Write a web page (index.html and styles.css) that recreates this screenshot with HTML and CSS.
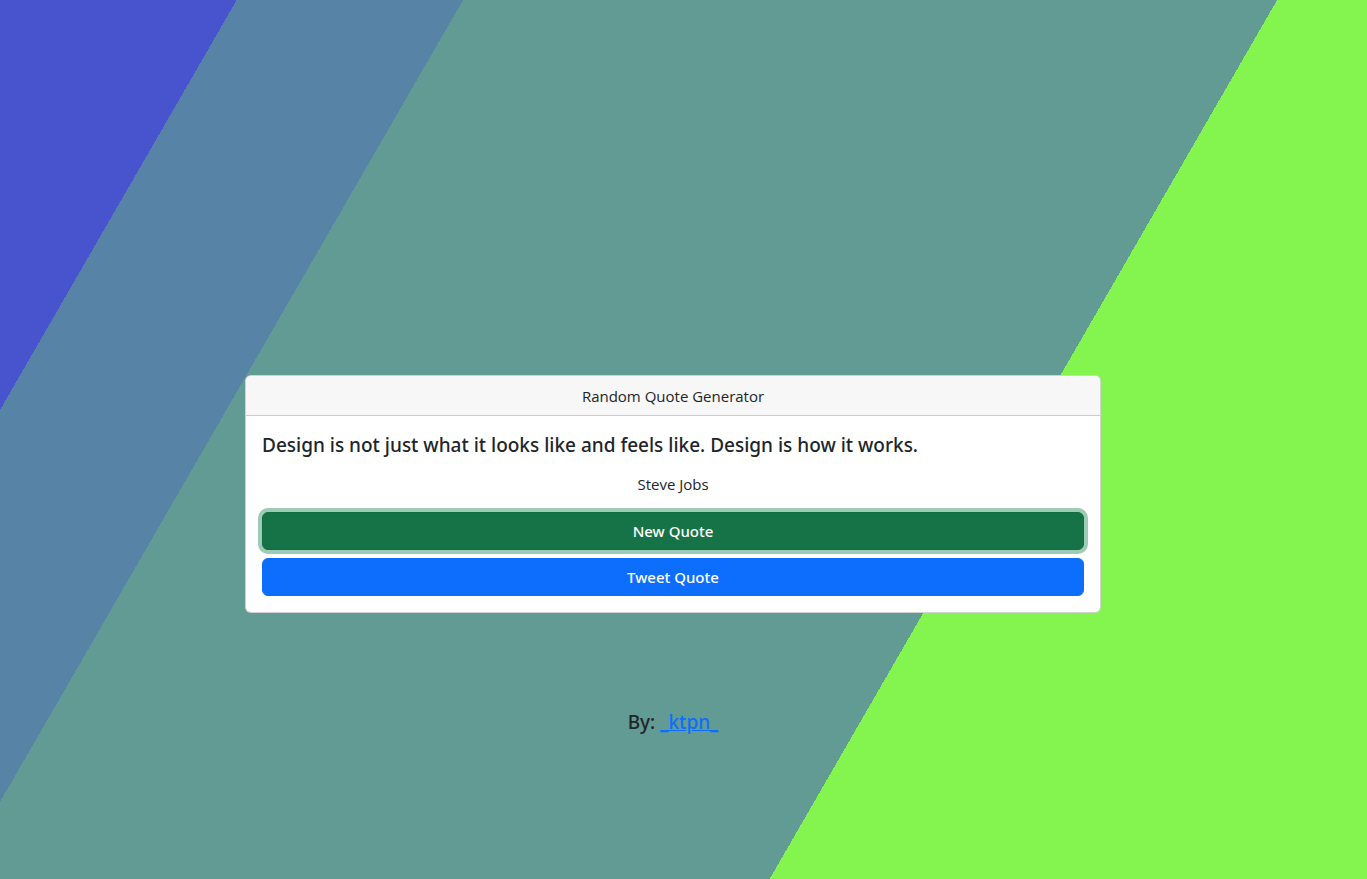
FILE: index.html
```html
<!DOCTYPE html>
<html lang="en">
<head>
<meta charset="utf-8">
<title>Random Quote Generator</title>
<link rel="stylesheet" href="styles.css">
</head>
<body>
<div class="page">
  <div class="card">
    <div class="card-header">Random Quote Generator</div>
    <div class="card-body">
      <h5 class="quote">Design is not just what it looks like and feels like. Design is how it works.</h5>
      <p class="author">Steve Jobs</p>
      <div class="actions">
        <button class="btn btn-new" type="button">New Quote</button>
        <button class="btn btn-tweet" type="button">Tweet Quote</button>
      </div>
    </div>
  </div>
  <h5 class="credit">By: <a href="#" class="credit-link">_ktpn_</a></h5>
</div>
</body>
</html>
```

FILE: styles.css
```css
html, body {
  margin: 0;
  padding: 0;
}

body {
  min-height: 879px;
  font-family: "Open Sans", "Noto Sans", sans-serif;
  color: #212529;
  background: linear-gradient(120deg,
    #4854ce 205px, #5783a6 205px,
    #5783a6 401px, #619b94 401px,
    #619b94 1106px, #84f54f 1106px);
  background-repeat: no-repeat;
}

.page {
  display: flex;
  flex-direction: column;
  align-items: center;
  padding: 375px 21px 0 0;
}

.card {
  width: 856px;
  box-sizing: border-box;
  background: #fff;
  border: 1px solid rgba(0, 0, 0, 0.175);
  border-radius: 6px;
  overflow: hidden;
}

.card-header {
  padding: 8px 16px 7px;
  line-height: 24px;
  font-size: 15px;
  text-align: center;
  background: #f7f7f7;
  border-bottom: 1px solid rgba(0, 0, 0, 0.175);
}

.card-body {
  padding: 17px 16px 16px;
}

.quote {
  margin: 0 0 15px;
  font-family: "Noto Sans", "Open Sans", sans-serif;
  font-size: 19px;
  font-weight: 500;
  line-height: 24px;
}

.author {
  margin: 0 0 16px;
  font-size: 15px;
  line-height: 24px;
  text-align: center;
}

.actions {
  display: flex;
  flex-direction: column;
  gap: 8px;
}

.btn {
  height: 38px;
  border: 1px solid transparent;
  border-radius: 6px;
  font-family: "Noto Sans", "Open Sans", sans-serif;
  font-size: 15px;
  font-weight: 500;
  color: #fff;
  padding: 6px 12px;
  line-height: 24px;
}

.btn-new {
  background: #157347;
  border-color: #146c43;
  box-shadow: 0 0 0 4px rgba(60, 153, 110, 0.5);
}

.btn-tweet {
  background: #0d6efd;
  border-color: #0d6efd;
}

.credit {
  margin: 97px 0 0;
  font-family: "Noto Sans", "Open Sans", sans-serif;
  font-size: 19px;
  font-weight: 500;
  line-height: 24px;
}

.credit-link {
  color: #0d6efd;
  text-decoration: underline;
}
```
